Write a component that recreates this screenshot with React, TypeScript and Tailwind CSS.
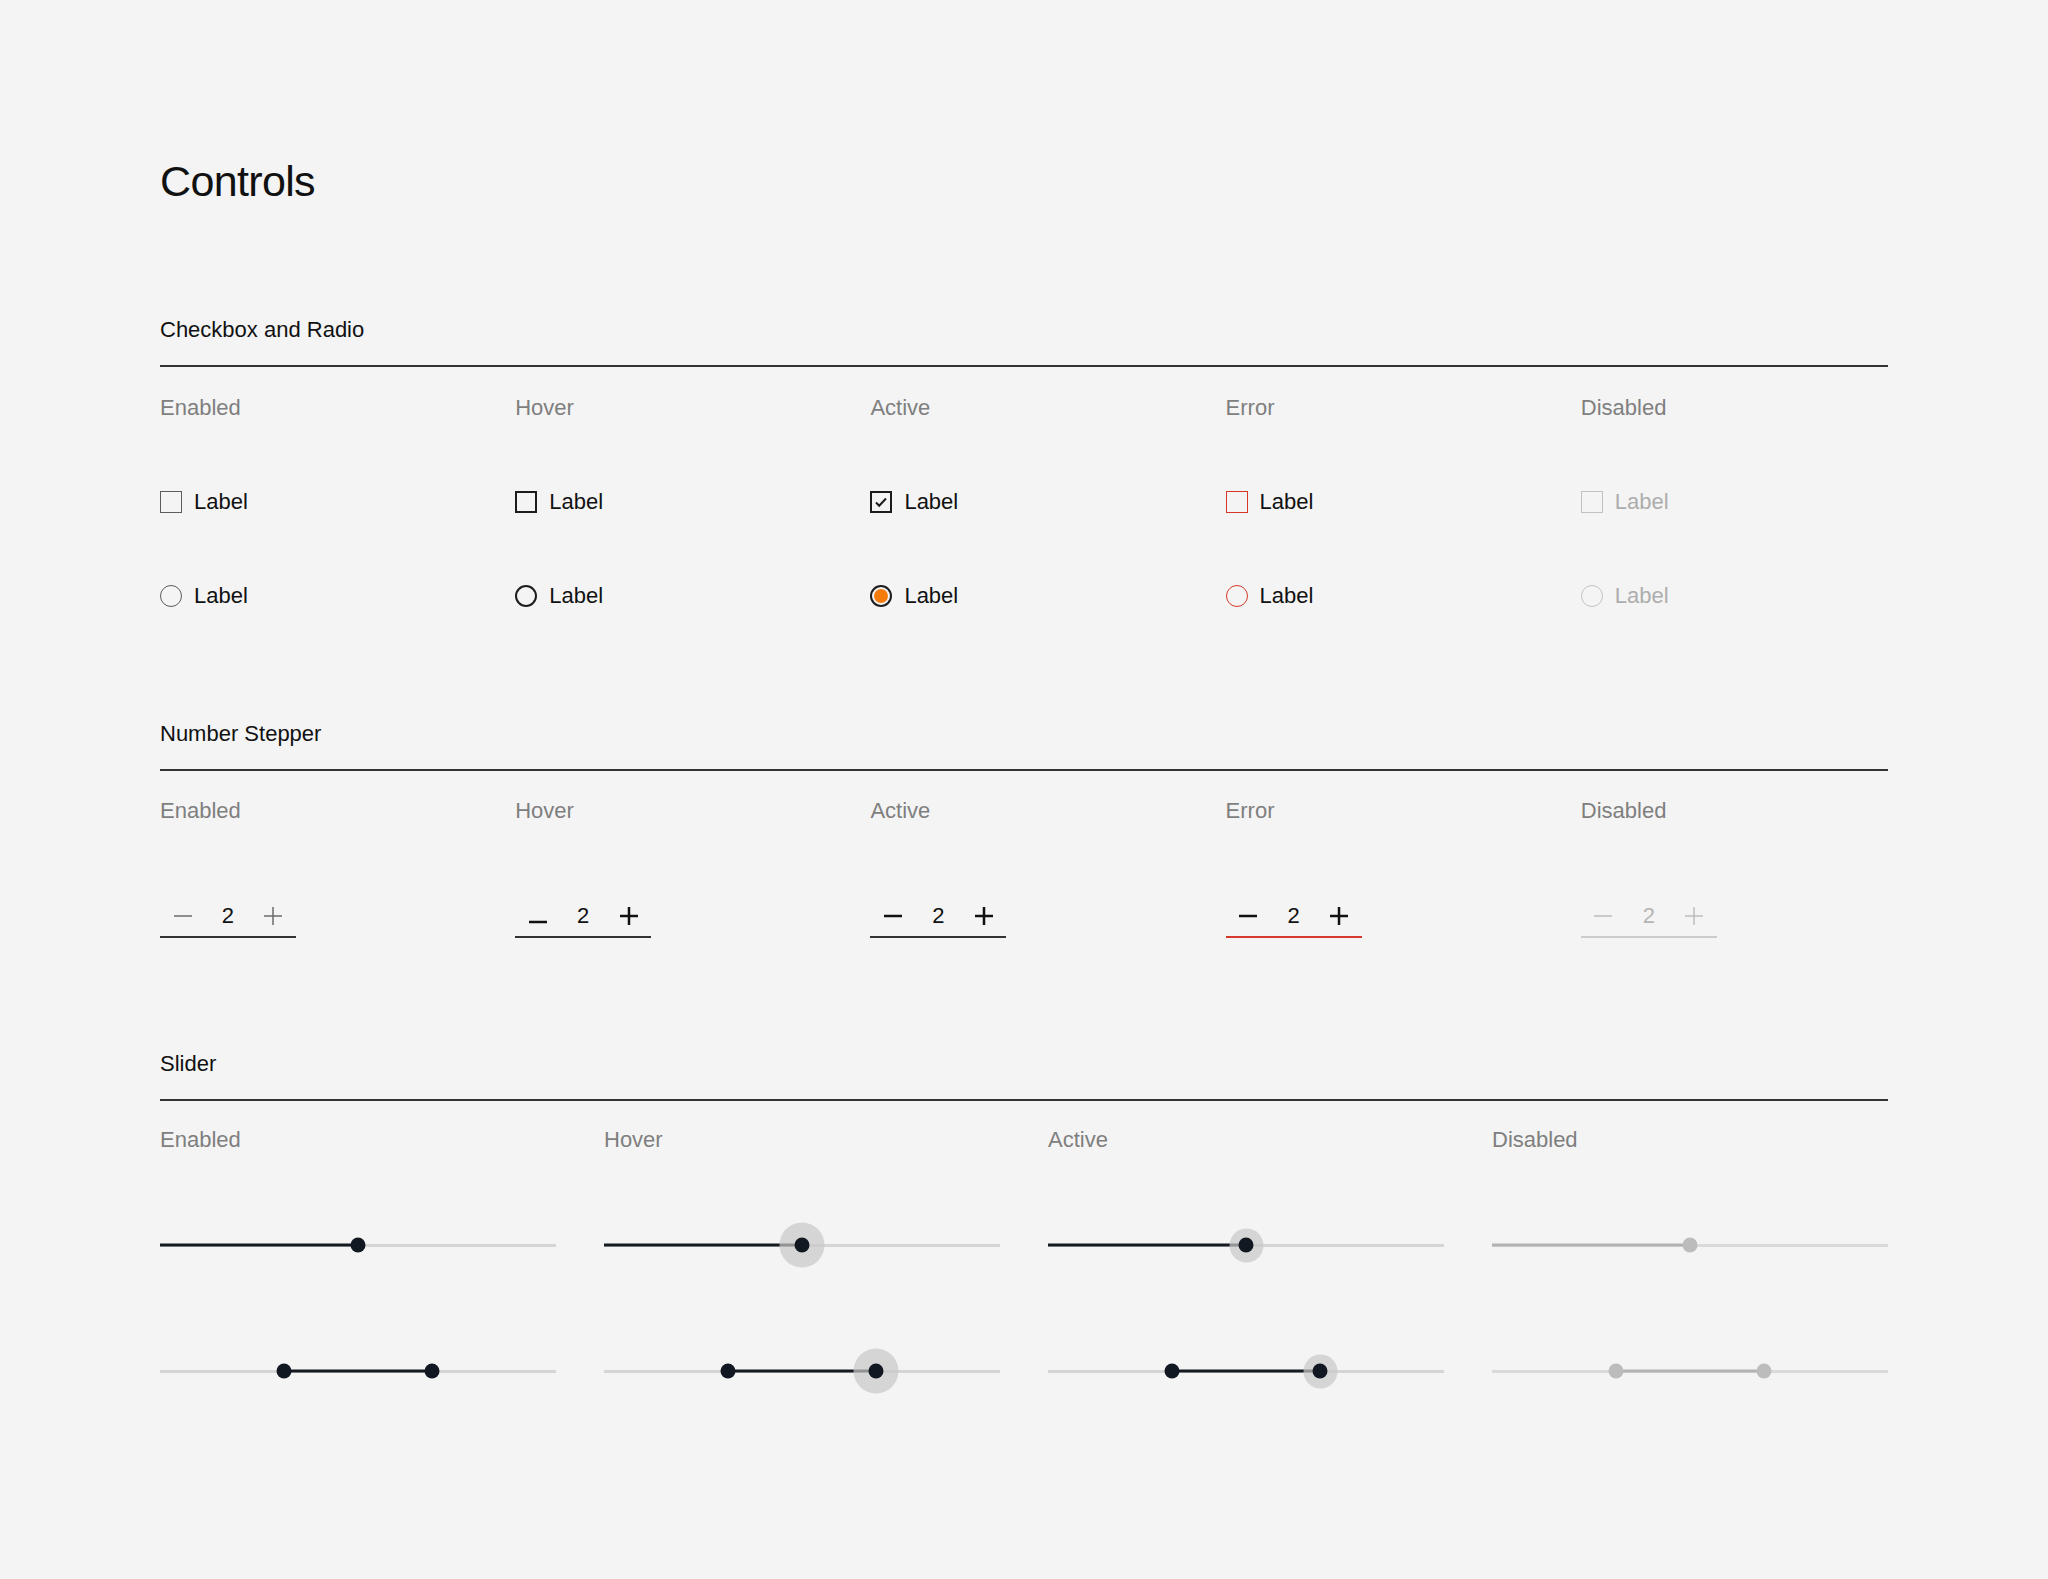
import React from 'react';

type State = 'enabled' | 'hover' | 'active' | 'error' | 'disabled';

const STATES: State[] = ['enabled', 'hover', 'active', 'error', 'disabled'];
const SLIDER_STATES: State[] = ['enabled', 'hover', 'active', 'disabled'];

const stateLabel: Record<State, string> = {
  enabled: 'Enabled',
  hover: 'Hover',
  active: 'Active',
  error: 'Error',
  disabled: 'Disabled',
};

const SectionHeading = ({ title }: { title: string }) => (
  <div className="pb-[21px] border-b-2 border-[#333333]">
    <h2 className="text-[22px] leading-[28px] text-[#111111]">{title}</h2>
  </div>
);

const StateLabel = ({ state }: { state: State }) => (
  <div className="text-[22px] leading-[28px] text-[#7f7f7f]">{stateLabel[state]}</div>
);

const Checkbox = ({ state }: { state: State }) => {
  const box = {
    enabled: 'border-[1.5px] border-[#5c5c5c]',
    hover: 'border-2 border-[#1c1c1c]',
    active: 'border-2 border-[#1c1c1c]',
    error: 'border-[1.5px] border-[#d6392c]',
    disabled: 'border-[1.5px] border-[#c2c2c2]',
  }[state];
  return (
    <label className="flex items-center gap-[12px] h-[28px]">
      <span className={`w-[22px] h-[22px] flex items-center justify-center ${box}`}>
        {state === 'active' && (
          <svg width="14" height="14" viewBox="0 0 14 14" fill="none">
            <path d="M2 7.5l3.2 3.2L12 3.5" stroke="#1c1c1c" strokeWidth="2" />
          </svg>
        )}
      </span>
      <span className={`text-[22px] leading-[28px] ${state === 'disabled' ? 'text-[#adadad]' : 'text-[#111111]'}`}>
        Label
      </span>
    </label>
  );
};

const Radio = ({ state }: { state: State }) => {
  const ring = {
    enabled: 'border-[1.5px] border-[#5c5c5c]',
    hover: 'border-2 border-[#1c1c1c]',
    active: 'border-2 border-[#1c1c1c]',
    error: 'border-[1.5px] border-[#d6392c]',
    disabled: 'border-[1.5px] border-[#c2c2c2]',
  }[state];
  return (
    <label className="flex items-center gap-[12px] h-[28px]">
      <span className={`w-[22px] h-[22px] rounded-full flex items-center justify-center ${ring}`}>
        {state === 'active' && <span className="w-[14px] h-[14px] rounded-full bg-[#f47b0c]" />}
      </span>
      <span className={`text-[22px] leading-[28px] ${state === 'disabled' ? 'text-[#adadad]' : 'text-[#111111]'}`}>
        Label
      </span>
    </label>
  );
};

const Minus = ({ color, weight }: { color: string; weight: number }) => (
  <svg width="20" height="20" viewBox="0 0 20 20" fill="none">
    <path d="M1 10h18" stroke={color} strokeWidth={weight} />
  </svg>
);

const Plus = ({ color, weight }: { color: string; weight: number }) => (
  <svg width="20" height="20" viewBox="0 0 20 20" fill="none">
    <path d="M1 10h18M10 1v18" stroke={color} strokeWidth={weight} />
  </svg>
);

const Stepper = ({ state }: { state: State }) => {
  const line = {
    enabled: 'border-[#333333]',
    hover: 'border-[#333333]',
    active: 'border-[#333333]',
    error: 'border-[#d6392c]',
    disabled: 'border-[#cccccc]',
  }[state];
  const iconColor = state === 'disabled' ? '#bdbdbd' : state === 'enabled' ? '#6b6b6b' : '#111111';
  const weight = state === 'enabled' || state === 'disabled' ? 1.5 : 2.5;
  return (
    <div className={`w-[136px] h-[42px] grid grid-cols-3 items-center border-b-2 ${line}`}>
      <button className={`flex justify-center ${state === 'hover' ? 'translate-y-[6px]' : ''}`}>
        <Minus color={iconColor} weight={weight} />
      </button>
      <span className={`text-center text-[22px] leading-[28px] ${state === 'disabled' ? 'text-[#b5b5b5]' : 'text-[#111111]'}`}>
        2
      </span>
      <button className="flex justify-center">
        <Plus color={iconColor} weight={weight} />
      </button>
    </div>
  );
};

const Slider = ({ state, values }: { state: State; values: number[] }) => {
  const disabled = state === 'disabled';
  const from = values.length > 1 ? values[0] : 0;
  const to = values[values.length - 1];
  const haloSize = state === 'hover' ? 'w-[45px] h-[45px]' : 'w-[34px] h-[34px]';
  const showHalo = state === 'hover' || state === 'active';
  return (
    <div className="relative h-[46px] flex items-center">
      <div className={`w-full h-[3px] ${disabled ? 'bg-[#dadada]' : 'bg-[#d5d5d5]'}`} />
      <div
        className={`absolute h-[3px] top-1/2 -translate-y-1/2 ${disabled ? 'bg-[#b3b3b3]' : 'bg-[#151a21]'}`}
        style={{ left: `${from}%`, width: `${to - from}%` }}
      />
      {values.map((v, i) => (
        <div
          key={i}
          className="absolute top-1/2 -translate-x-1/2 -translate-y-1/2 flex items-center justify-center"
          style={{ left: `${v}%` }}
        >
          {showHalo && i === values.length - 1 && (
            <span className={`absolute rounded-full bg-[#c8c8c8]/70 ${haloSize}`} />
          )}
          <span className={`relative w-[15px] h-[15px] rounded-full ${disabled ? 'bg-[#bcbcbc]' : 'bg-[#121821]'}`} />
        </div>
      ))}
    </div>
  );
};

export default function App() {
  return (
    <div className="min-h-[1579px] bg-[#f4f4f4] px-[160px] pt-[155px] font-['Liberation_Sans',Arial,sans-serif]">
      <h1 className="text-[43px] leading-[52px] tracking-[-0.015em] text-[#111111]">Controls</h1>

      {/* Checkbox and Radio */}
      <section className="mt-[109px]">
        <SectionHeading title="Checkbox and Radio" />
        <div className="grid grid-cols-5 gap-x-12 mt-[27px]">
          {STATES.map((s) => (
            <div key={s} className="flex flex-col">
              <StateLabel state={s} />
              <div className="mt-[66px]">
                <Checkbox state={s} />
              </div>
              <div className="mt-[66px]">
                <Radio state={s} />
              </div>
            </div>
          ))}
        </div>
      </section>

      {/* Number Stepper */}
      <section className="mt-[110px]">
        <SectionHeading title="Number Stepper" />
        <div className="grid grid-cols-5 gap-x-12 mt-[26px]">
          {STATES.map((s) => (
            <div key={s} className="flex flex-col">
              <StateLabel state={s} />
              <div className="mt-[71px]">
                <Stepper state={s} />
              </div>
            </div>
          ))}
        </div>
      </section>

      {/* Slider */}
      <section className="mt-[112px]">
        <SectionHeading title="Slider" />
        <div className="grid grid-cols-4 gap-x-12 mt-[25px]">
          {SLIDER_STATES.map((s) => (
            <div key={s} className="flex flex-col">
              <StateLabel state={s} />
              <div className="mt-[68px]">
                <Slider state={s} values={[50]} />
              </div>
              <div className="mt-[80px]">
                <Slider state={s} values={[31.4, 68.8]} />
              </div>
            </div>
          ))}
        </div>
      </section>
    </div>
  );
}
